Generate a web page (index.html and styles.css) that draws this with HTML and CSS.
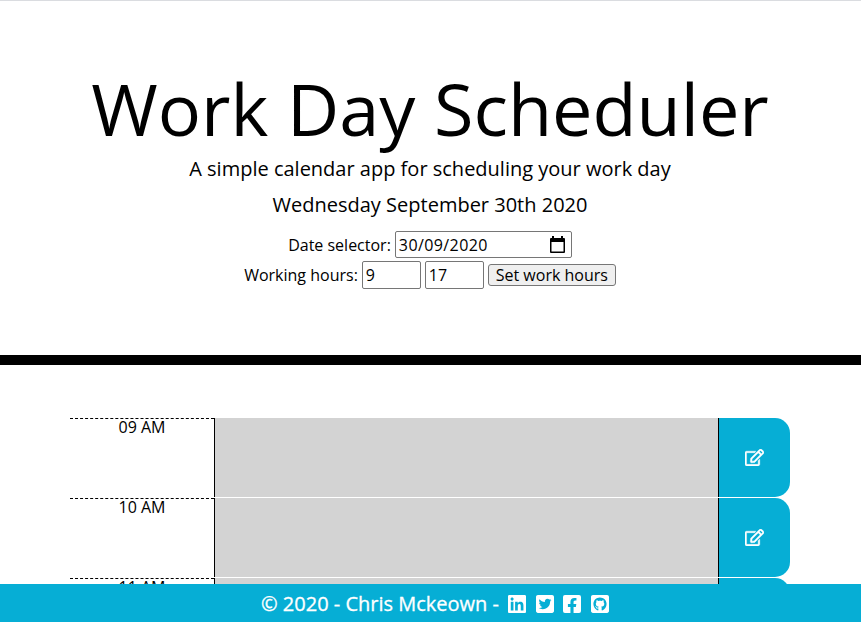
FILE: index.html
```
<!DOCTYPE html>
<html lang="en">
<head>
<meta charset="utf-8">
<title>Work Day Scheduler</title>
<link rel="stylesheet" href="styles.css">
</head>
<body>
<header class="hero">
  <h1 class="title">Work Day Scheduler</h1>
  <p class="lead">A simple calendar app for scheduling your work day</p>
  <p class="today">Wednesday September 30th 2020</p>
  <div class="controls date-row">
    <label>Date selector:</label>
    <div class="field date-field"><span>30/09/2020</span>
      <svg class="calendar" viewBox="0 0 15 17" aria-hidden="true"><path fill-rule="evenodd" d="M2 0h2v2h7V0h2v2h1a1 1 0 0 1 1 1v13a1 1 0 0 1-1 1H1a1 1 0 0 1-1-1V3a1 1 0 0 1 1-1h1zM1.5 6v9.5h12V6z"/></svg>
    </div>
  </div>
  <div class="controls">
    <label>Working hours:</label>
    <div class="field hour-field">9</div>
    <div class="field hour-field">17</div>
    <button class="set-hours">Set work hours</button>
  </div>
</header>
<main class="schedule">
  <div class="row">
    <div class="hour">09 AM</div><div class="entry"></div>
    <button class="save" aria-label="Edit"><svg viewBox="0 0 576 512"><use href="#edit"/></svg></button>
  </div>
  <div class="row">
    <div class="hour">10 AM</div><div class="entry"></div>
    <button class="save" aria-label="Edit"><svg viewBox="0 0 576 512"><use href="#edit"/></svg></button>
  </div>
  <div class="row">
    <div class="hour">11 AM</div><div class="entry"></div>
    <button class="save" aria-label="Edit"><svg viewBox="0 0 576 512"><use href="#edit"/></svg></button>
  </div>
</main>
<footer class="footer">
  <span>© 2020 - Chris Mckeown -</span>
  <svg viewBox="0 32 448 448"><path d="M416 32H31.9C14.3 32 0 46.5 0 64.3v383.4C0 465.5 14.3 480 31.9 480H416c17.6 0 32-14.5 32-32.3V64.3c0-17.8-14.4-32.3-32-32.3zM135.4 416H69V202.2h66.5V416zm-33.2-243c-21.3 0-38.5-17.3-38.5-38.5S80.9 96 102.2 96c21.2 0 38.5 17.3 38.5 38.5 0 21.3-17.2 38.5-38.5 38.5zm282.1 243h-66.4V312c0-24.8-.5-56.7-34.5-56.7-34.6 0-39.9 27-39.9 54.9V416h-66.4V202.2h63.7v29.2h.9c8.9-16.8 30.6-34.5 62.9-34.5 67.2 0 79.7 44.3 79.7 101.9V416z"/></svg>
  <svg viewBox="0 32 448 448"><path d="M400 32H48C21.5 32 0 53.5 0 80v352c0 26.5 21.5 48 48 48h352c26.5 0 48-21.5 48-48V80c0-26.5-21.5-48-48-48zm-48.9 158.8c.2 2.8.2 5.7.2 8.5 0 86.7-66 186.6-186.6 186.6-37.2 0-71.7-10.8-100.7-29.4 5.3.6 10.4.8 15.8.8 30.7 0 58.9-10.4 81.4-28-28.8-.6-53-19.5-61.3-45.5 10.1 1.5 19.2 1.5 29.6-1.2-30-6.1-52.5-32.5-52.5-64.4v-.8c8.7 4.9 18.9 7.9 29.6 8.3a65.447 65.447 0 0 1-29.2-54.6c0-12.2 3.2-23.4 8.9-33.1 32.3 39.8 80.8 65.8 135.2 68.6-9.3-44.5 24-80.6 64-80.6 18.9 0 35.9 7.9 47.9 20.7 14.8-2.8 29-8.3 41.6-15.8-4.9 15.2-15.2 28-28.8 36.1 13.2-1.4 26-5.1 37.8-10.2-8.9 13.1-20.1 24.7-32.9 34z"/></svg>
  <svg viewBox="0 32 448 448"><path d="M400 32H48A48 48 0 0 0 0 80v352a48 48 0 0 0 48 48h137.25V327.69h-63V256h63v-54.64c0-62.15 37-96.48 93.67-96.48 27.14 0 55.52 4.84 55.52 4.84v61h-31.27c-30.81 0-40.42 19.12-40.42 38.73V256h68.78l-11 71.69h-57.78V480H400a48 48 0 0 0 48-48V80a48 48 0 0 0-48-48z"/></svg>
  <svg viewBox="0 32 448 448"><path d="M400 32H48C21.5 32 0 53.5 0 80v352c0 26.5 21.5 48 48 48h352c26.5 0 48-21.5 48-48V80c0-26.5-21.5-48-48-48zM277.3 415.7c-8.4 1.5-11.5-3.7-11.5-8 0-5.4.2-33 .2-55.3 0-15.6-5.2-25.5-11.3-30.7 37-4.1 76-9.2 76-73.1 0-18.2-6.5-27.3-17.1-39 1.7-4.3 7.4-22-1.7-45-13.9-4.3-45.7 17.9-45.7 17.9-13.2-3.7-27.5-5.6-41.6-5.6-14.1 0-28.4 1.9-41.6 5.6 0 0-31.8-22.2-45.7-17.9-9.1 22.9-3.5 40.6-1.7 45-10.6 11.7-15.6 20.8-15.6 39 0 63.6 37.3 69 74.3 73.1-4.8 4.3-9.1 11.7-10.6 22.3-9.5 4.3-33.8 11.7-48.3-13.9-9.1-15.8-25.5-17.1-25.5-17.1-16.2-.2-1.1 10.2-1.1 10.2 10.8 5 18.4 24.2 18.4 24.2 9.7 29.7 56.1 19.7 56.1 19.7 0 13.9.2 36.5.2 40.6 0 4.3-3 9.5-11.5 8-66-22.1-112.2-84.9-112.2-158.3 0-91.8 70.2-161.5 162-161.5S388 165.6 388 257.4c.1 73.4-44.7 136.3-110.7 158.3z"/></svg>
</footer>
<svg class="defs" width="0" height="0"><symbol id="edit" viewBox="0 0 576 512"><path d="M402.3 344.9l32-32c5-5 13.7-1.5 13.7 5.7V464c0 26.5-21.5 48-48 48H48c-26.5 0-48-21.5-48-48V112c0-26.5 21.5-48 48-48h273.5c7.1 0 10.7 8.6 5.7 13.7l-32 32c-1.5 1.5-3.5 2.3-5.7 2.3H48v352h352V350.5c0-2.1.8-4.1 2.3-5.6zm156.6-201.8L296.3 405.7l-90.4 10c-26.2 2.9-48.5-19.2-45.6-45.6l10-90.4L432.9 17.1c22.9-22.9 59.9-22.9 82.7 0l43.2 43.2c22.9 22.9 22.9 60 .1 82.8zM460.1 174L402 115.9 216.2 301.8l-7.3 65.3 65.3-7.3L460.1 174zm64.8-79.7l-43.2-43.2c-4.1-4.1-10.8-4.1-14.8 0L436 82l58.1 58.1 30.9-30.9c4-4.2 4-10.8-.1-14.9z"/></symbol></svg>
</body>
</html>
```
FILE: styles.css
```
* { box-sizing: border-box; }
html, body { height: 100%; overflow: hidden; }
body {
  margin: 0;
  font: 16px/24px "Open Sans", sans-serif;
  color: #000;
  background: #fff;
}
.hero {
  height: 365px;
  padding: 64px 1px 0 0;
  border-top: 1px solid #dadce0;
  border-bottom: 10px solid #000;
  text-align: center;
}
.title { margin: 0 0 2px; font-size: 72px; line-height: 87px; font-weight: 400; }
.lead, .today { margin: 0; font-size: 20px; line-height: 30px; }
.today { margin-top: 6px; }
.controls { display: flex; justify-content: center; align-items: center; gap: 4px; height: 28px; }
.date-row { margin: 11px 0 3px; height: 27px; }
.field {
  display: flex;
  align-items: center;
  height: 28px;
  padding: 0 3px;
  border: 1px solid #767676;
  border-radius: 2px;
}
.date-field { width: 177px; height: 27px; justify-content: space-between; padding-right: 6px; letter-spacing: 0.4px; }
.calendar { width: 15px; height: 17px; margin-top: -1px; }
.hour-field { width: 59px; }
.set-hours {
  width: 128px;
  height: 22px;
  padding: 0;
  border: 1px solid #767676;
  border-radius: 3px;
  background: #efefef;
  font: 16px/20px "Open Sans", sans-serif;
  color: #000;
}
.schedule { width: 720px; height: 204px; margin: 53px 0 0 70px; overflow: hidden; }
.row { display: grid; grid-template-columns: 144px 505px 71px; height: 80px; }
.hour { border-top: 1px dashed #000; text-align: center; line-height: 17px; }
.entry { height: 79px; background: #d3d3d3; border: solid #000; border-width: 0 1px; }
.save {
  display: flex;
  align-items: center;
  justify-content: center;
  height: 79px;
  padding: 0 0 1px;
  border: 0;
  border-radius: 0 15px 15px 0;
  background: #06aed5;
}
.save svg { width: 19px; height: 17px; fill: #fff; stroke: #fff; stroke-width: 12; overflow: visible; }
.footer {
  position: fixed;
  inset: auto 0 0;
  display: flex;
  align-items: center;
  justify-content: center;
  gap: 9.5px;
  height: 38px;
  padding: 2px 0 0 9px;
  background: #06aed5;
  color: #fff;
  font-size: 20px;
  -webkit-text-stroke: 0.3px #fff;
}
.footer svg { width: 18px; height: 18px; fill: #fff; }
.defs { position: absolute; }
```
